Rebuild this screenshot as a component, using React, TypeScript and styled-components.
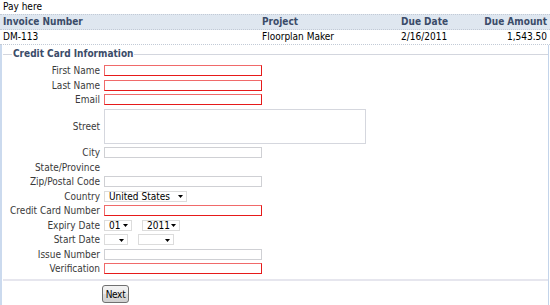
import React from "react";
import styled, { createGlobalStyle } from "styled-components";

const Global = createGlobalStyle`
  html, body, #root { height: 100%; }
  body {
    margin: 0;
    background: #fff;
    font-family: "DejaVu Sans Condensed", "DejaVu Sans", sans-serif;
    font-stretch: condensed;
    font-size: 10px;
    color: #000;
  }
`;

const Page = styled.div`
  width: 550px;
  min-height: 100vh;
  display: flex;
  flex-direction: column;
`;

const Title = styled.div`
  height: 14px;
  line-height: 14px;
  padding: 0 3px;
`;

const Row = styled.div<{ $head?: boolean }>`
  display: grid;
  grid-template-columns: 259px 139px 72px 1fr;
  height: 14px;
  line-height: 14px;
  border-bottom: 1px dotted #c2cad6;
  ${(p) =>
    p.$head &&
    `
    border-top: 1px dotted #c2cad6;
    background: #dfe7f0;
    font-weight: bold;
    color: #3b4c69;
  `}
`;

const Cell = styled.div<{ $right?: boolean }>`
  padding: 0 3px;
  text-align: ${(p) => (p.$right ? "right" : "left")};
  white-space: nowrap;
`;

const Panel = styled.div`
  flex: 1;
  width: 546px;
  border-left: 2px solid #cbdaee;
  border-right: 1px solid #c3d4ea;
`;

const Fieldset = styled.fieldset`
  margin: 2px 0 0 1px;
  padding: 0 0 5px 0;
  border: none;
  border-top: 1px solid #d3d6de;
  border-bottom: 2px solid #e6e6ee;
`;

const Legend = styled.legend`
  margin-left: 9px;
  padding: 0 1px;
  line-height: 14px;
  font-weight: bold;
  color: #3b4c69;
`;

const FormGrid = styled.div`
  margin-top: 4px;
  display: grid;
  grid-template-columns: 97px 1fr;
  column-gap: 4px;
  row-gap: 3.5px;
  align-items: center;
`;

const Label = styled.label`
  text-align: right;
  line-height: 11px;
  color: #3a3a3a;
  white-space: nowrap;
`;

const Field = styled.div`
  display: flex;
  gap: 10px;
  align-items: center;
`;

const TextInput = styled.div<{ $invalid?: boolean; $w?: number }>`
  box-sizing: border-box;
  width: ${(p) => p.$w ?? 158}px;
  height: 11px;
  border: 1px solid ${(p) => (p.$invalid ? "#e61a1a" : "#cfd0d4")};
  ${(p) => p.$invalid && "border-top-color: #f06a6a; border-left-color: #f06a6a;"}
  background: #fff;
`;

const TextArea = styled.div`
  box-sizing: border-box;
  width: 262px;
  height: 35px;
  border: 1px solid #d5d7de;
  background: #fff;
`;

const SelectBox = styled.div<{ $w: number }>`
  box-sizing: border-box;
  width: ${(p) => p.$w}px;
  height: 11px;
  border: 1px solid #dcdcdc;
  display: flex;
  align-items: center;
  justify-content: space-between;
  padding: 0 3px 0 4px;
  line-height: 9px;
  color: #000;
  svg { flex: none; margin-top: 1px; }
`;

const ButtonRow = styled.div`
  padding: 4px 0 0 100px;
`;

const Button = styled.button`
  box-sizing: border-box;
  width: 27px;
  height: 18px;
  padding: 0;
  border: 1px solid #707070;
  border-radius: 3px;
  background: linear-gradient(#f3f3f3, #ebebeb 48%, #dcdcdc 52%, #d0d0d0);
  font-family: inherit;
  font-size: 10px;
  color: #000;
  letter-spacing: -0.3px;
`;

const Arrow = () => (
  <svg width="5" height="3" viewBox="0 0 5 3">
    <path d="M0 0h5L2.5 3z" fill="#000" />
  </svg>
);

const Select = ({ w, value }: { w: number; value?: string }) => (
  <SelectBox $w={w}>
    <span>{value ?? ""}</span>
    <Arrow />
  </SelectBox>
);

export default function App() {
  return (
    <>
      <Global />
      <Page>
        <Title>Pay here</Title>
        <Row $head>
          <Cell>Invoice Number</Cell>
          <Cell>Project</Cell>
          <Cell>Due Date</Cell>
          <Cell $right>Due Amount</Cell>
        </Row>
        <Row>
          <Cell>DM-113</Cell>
          <Cell>Floorplan Maker</Cell>
          <Cell>2/16/2011</Cell>
          <Cell $right>1,543.50</Cell>
        </Row>
        <Panel>
          <Fieldset>
            <Legend>Credit Card Information</Legend>
            <FormGrid>
              <Label>First Name</Label>
              <TextInput $invalid />
              <Label>Last Name</Label>
              <TextInput $invalid />
              <Label>Email</Label>
              <TextInput $invalid />
              <Label>Street</Label>
              <TextArea />
              <Label>City</Label>
              <TextInput />
              <Label>State/Province</Label>
              <div />
              <Label>Zip/Postal Code</Label>
              <TextInput />
              <Label>Country</Label>
              <Field>
                <Select w={83} value="United States" />
              </Field>
              <Label>Credit Card Number</Label>
              <TextInput $invalid />
              <Label>Expiry Date</Label>
              <Field>
                <Select w={28} value="01" />
                <Select w={38} value="2011" />
              </Field>
              <Label>Start Date</Label>
              <Field>
                <Select w={24} />
                <Select w={36} />
              </Field>
              <Label>Issue Number</Label>
              <TextInput />
              <Label>Verification</Label>
              <TextInput $invalid />
            </FormGrid>
          </Fieldset>
          <ButtonRow>
            <Button>Next</Button>
          </ButtonRow>
        </Panel>
      </Page>
    </>
  );
}
